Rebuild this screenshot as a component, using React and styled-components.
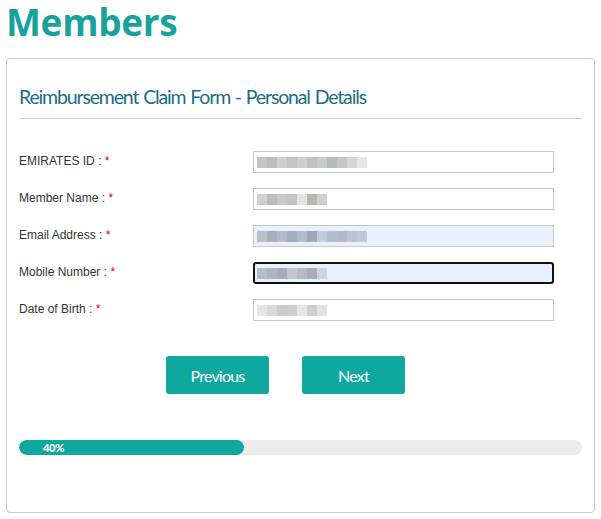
import React from "react";
import styled, { createGlobalStyle } from "styled-components";

const Global = createGlobalStyle`
  html, body { margin: 0; padding: 0; background: #fff; }
  body { font-family: "Liberation Sans", Arial, sans-serif; }
`;

const Page = styled.div`
  width: 601px;
  padding: 0 6px;
  box-sizing: border-box;
`;

const Heading = styled.h1`
  margin: 0;
  padding: 2px 0 0 0;
  height: 58px;
  box-sizing: border-box;
  line-height: 40px;
  font-family: "Open Sans", sans-serif;
  font-weight: 700;
  font-size: 37px;
  letter-spacing: -0.3px;
  color: #17a39b;
`;

const Card = styled.div`
  width: 589px;
  height: 455px;
  box-sizing: border-box;
  border: 1px solid #cccccc;
  border-radius: 4px;
  padding: 0 12px;
`;

const Title = styled.h2`
  margin: 0;
  padding: 25px 0 0 0;
  height: 60px;
  box-sizing: border-box;
  font-family: Lato, sans-serif;
  font-weight: 400;
  font-size: 19.5px;
  letter-spacing: -1.15px;
  word-spacing: 1px;
  line-height: 26px;
  color: #1b6e83;
  border-bottom: 1px solid #cccccc;
`;

const Form = styled.div`
  display: flex;
  flex-direction: column;
  gap: 15px;
  padding-top: 32px;
`;

const Row = styled.div`
  display: grid;
  grid-template-columns: 234px 301px;
  align-items: center;
  height: 22px;
`;

const Label = styled.label`
  font-size: 12px;
  color: #333;
  margin-top: -2px;
`;

const Req = styled.span`
  color: #d0021b;
`;

const Field = styled.div`
  height: 22px;
  box-sizing: border-box;
  border: ${(p) => (p.$focus ? "2px solid #111" : "1px solid #c6c6c6")};
  border-radius: ${(p) => (p.$focus ? "3px" : "0")};
  background: ${(p) => (p.$fill ? "#e8f0fe" : "#fff")};
  display: flex;
  align-items: center;
  padding-left: ${(p) => (p.$focus ? "2px" : "3px")};
`;

const Pixels = styled.div`
  display: flex;
  height: 11px;
`;

const Px = styled.span`
  width: 10px;
  height: 11px;
  display: block;
`;

const Buttons = styled.div`
  display: flex;
  justify-content: center;
  gap: 33px;
  padding-top: 35px;
  padding-right: 30px;
`;

const Button = styled.button`
  width: 103px;
  height: 38px;
  border: 0;
  border-radius: 3px;
  background: #0ea89f;
  color: #fff;
  font-family: Lato, sans-serif;
  font-size: 16px;
  letter-spacing: -0.8px;
  cursor: pointer;
`;

const Progress = styled.div`
  margin-top: 46px;
  height: 15px;
  border-radius: 8px;
  background: #ececec;
  overflow: hidden;
`;

const Bar = styled.div`
  height: 100%;
  background: #0ea89f;
  border-radius: 8px;
  color: #fff;
  font-family: Lato, sans-serif;
  font-weight: 900;
  font-size: 11px;
  letter-spacing: -0.3px;
  line-height: 15px;
  padding-left: 24px;
  box-sizing: border-box;
`;

const palettes = {
  a: ["#c4c4c4", "#bcbcbc", "#cfcfcf", "#c2c4c2", "#cfcfcf", "#c0c2c0", "#c9cbc9", "#b8bcb8", "#c5c5c5", "#d6d6d6", "#e6e6e6"],
  b: ["#d0cfd1", "#bdbcba", "#c8c8c8", "#c3c3c3", "#e3e3e3", "#b8b6b2", "#cfd0cc"],
  c: ["#b9c0c6", "#a9b0bb", "#b5bbc5", "#a4adbb", "#b1bccb", "#a0a8b6", "#c2ccd8", "#b6bccb", "#b3b9c6", "#bcc4ce", "#c1cad9"],
  d: ["#b4bcc8", "#a9b5c0", "#a9abbb", "#c1c8d4", "#b5bac4", "#a7adbb", "#ccd3e0"],
  e: ["#e5e5e5", "#d8d8d8", "#cbcbcb", "#cdcdcd", "#e6e6e6", "#cecece", "#e2e2e2"],
};

const fields = [
  { label: "EMIRATES ID", p: "a" },
  { label: "Member Name", p: "b" },
  { label: "Email Address", p: "c", fill: true },
  { label: "Mobile Number", p: "d", fill: true, focus: true },
  { label: "Date of Birth", p: "e" },
];

export default function App() {
  return (
    <>
      <Global />
      <Page>
        <Heading>Members</Heading>
        <Card>
          <Title>Reimbursement Claim Form - Personal Details</Title>
          <Form>
            {fields.map((f) => (
              <Row key={f.label}>
                <Label>
                  {f.label} : <Req>*</Req>
                </Label>
                <Field $fill={f.fill} $focus={f.focus}>
                  <Pixels>
                    {palettes[f.p].map((c, i) => (
                      <Px key={i} style={{ background: c }} />
                    ))}
                  </Pixels>
                </Field>
              </Row>
            ))}
          </Form>
          <Buttons>
            <Button>Previous</Button>
            <Button>Next</Button>
          </Buttons>
          <Progress>
            <Bar style={{ width: "40%" }}>40%</Bar>
          </Progress>
        </Card>
      </Page>
    </>
  );
}
